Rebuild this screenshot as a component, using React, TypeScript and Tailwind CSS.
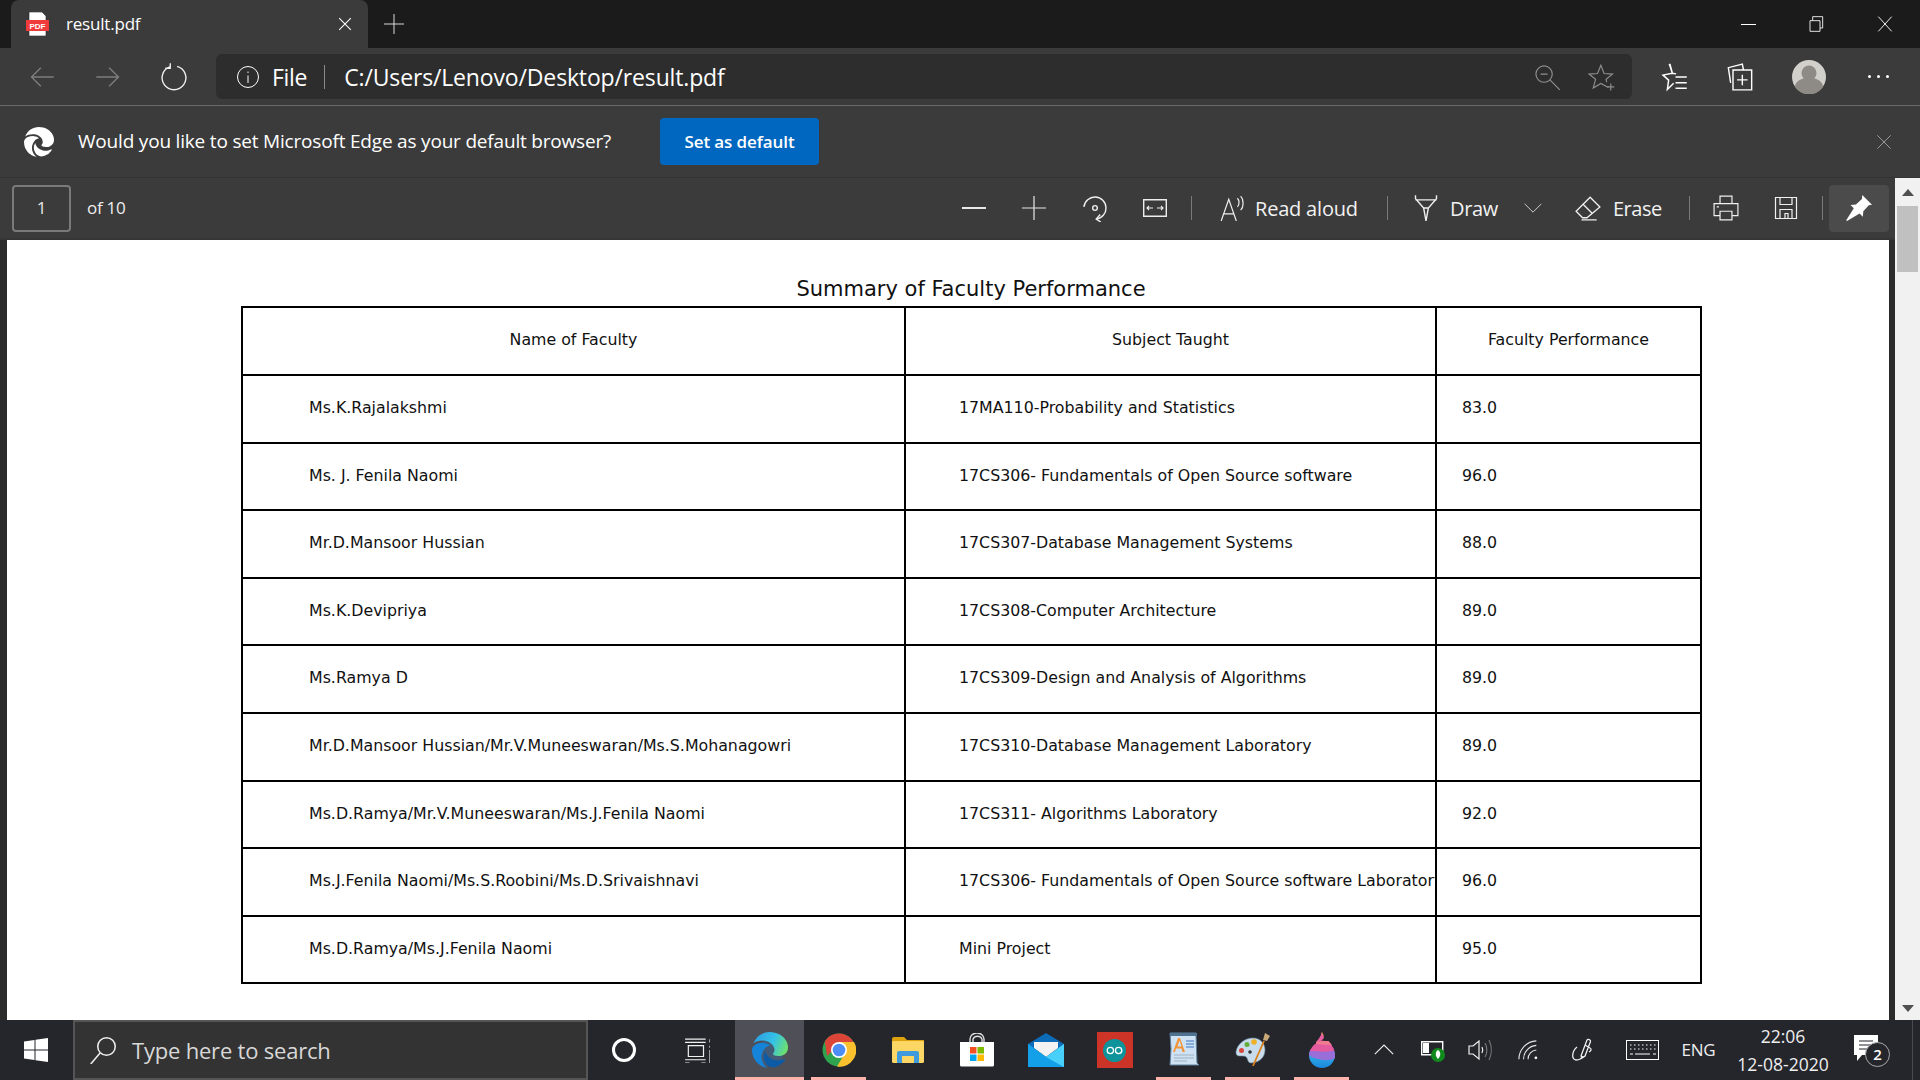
import type { ReactNode } from "react";

const EDGE_BOTTOM =
  "M21.86 17.86q.14 0 .25.12.1.13.1.25t-.11.33l-.32.46-.43.53-.44.5q-.21.25-.38.42l-.22.23q-.58.53-1.34 1.04-.76.51-1.6.91-.86.4-1.74.64t-1.67.24q-.9 0-1.69-.28-.8-.28-1.48-.78-.68-.5-1.22-1.17-.53-.66-.92-1.44-.38-.77-.58-1.6-.2-.83-.2-1.67 0-1 .32-1.96.33-.97.87-1.8.14.95.55 1.77.41.82 1.02 1.5.6.68 1.38 1.21.78.54 1.64.9.86.36 1.77.56.92.2 1.8.2 1.12 0 2.18-.24 1.06-.23 2.06-.72l.2-.1.2-.05z";
const EDGE_LEFT =
  "M6.36 16.59q0 1.1.27 2.15.27 1.06.78 2.03.51.96 1.24 1.77.74.82 1.66 1.4-1.47-.2-2.8-.74-1.33-.55-2.48-1.37-1.15-.83-2.08-1.9-.92-1.07-1.58-2.33T.36 14.94Q0 13.54 0 12.06q0-.81.32-1.49.31-.68.83-1.23.53-.55 1.2-.96.66-.4 1.35-.66.74-.27 1.5-.39.78-.12 1.55-.12.7 0 1.42.1.72.12 1.4.35.68.23 1.32.57.63.35 1.16.83-.35 0-.7.07-.33.07-.65.23v-.02q-.63.28-1.2.74-.57.46-1.05 1.04-.48.58-.87 1.26-.38.67-.65 1.39-.27.71-.42 1.44-.15.72-.15 1.38z";
const EDGE_TOP =
  "M11.96.06q1.7 0 3.33.39 1.63.38 3.07 1.15 1.43.77 2.62 1.93 1.18 1.16 1.98 2.7.49.94.76 1.96.28 1 .28 2.08 0 .89-.23 1.7-.24.8-.69 1.48-.45.68-1.1 1.22-.64.53-1.45.88-.54.24-1.11.36-.58.13-1.16.13-.42 0-.97-.03-.54-.03-1.1-.12-.55-.1-1.05-.28-.5-.19-.84-.5-.12-.09-.23-.24-.1-.16-.1-.33 0-.15.16-.35.16-.2.35-.5.2-.28.36-.68.16-.4.16-.95 0-1.06-.4-1.96-.4-.91-1.06-1.64-.66-.74-1.52-1.28-.86-.55-1.79-.89-.84-.3-1.72-.44-.87-.14-1.76-.14-1.55 0-3.06.45T.94 7.55q.71-1.74 1.81-3.13 1.1-1.38 2.52-2.35Q6.68 1.1 8.37.58q1.7-.52 3.58-.52Z";

const rows = [
  ["Ms.K.Rajalakshmi", "17MA110-Probability and Statistics", "83.0"],
  ["Ms. J. Fenila Naomi", "17CS306- Fundamentals of Open Source software", "96.0"],
  ["Mr.D.Mansoor Hussian", "17CS307-Database Management Systems", "88.0"],
  ["Ms.K.Devipriya", "17CS308-Computer Architecture", "89.0"],
  ["Ms.Ramya D", "17CS309-Design and Analysis of Algorithms", "89.0"],
  ["Mr.D.Mansoor Hussian/Mr.V.Muneeswaran/Ms.S.Mohanagowri", "17CS310-Database Management Laboratory", "89.0"],
  ["Ms.D.Ramya/Mr.V.Muneeswaran/Ms.J.Fenila Naomi", "17CS311- Algorithms Laboratory", "92.0"],
  ["Ms.J.Fenila Naomi/Ms.S.Roobini/Ms.D.Srivaishnavi", "17CS306- Fundamentals of Open Source software Laboratory", "96.0"],
  ["Ms.D.Ramya/Ms.J.Fenila Naomi", "Mini Project", "95.0"],
];

const Line = ({ size = 24, color = "#fff", width = 1.2, children }: { size?: number; color?: string; width?: number; children: ReactNode }) => (
  <svg width={size} height={size} viewBox="0 0 24 24" fill="none" stroke={color} strokeWidth={width}>
    {children}
  </svg>
);

const Cell = ({ w, children }: { w: string; children: ReactNode }) => (
  <div className={`${w} h-full flex items-center justify-center shrink-0`}>{children}</div>
);

const Sep = ({ className }: { className: string }) => <div className={`w-px h-[24px] bg-[#7a7a7a] shrink-0 ${className}`} />;

const TaskIcon = ({ active, underline, children }: { active?: boolean; underline?: boolean; children: ReactNode }) => (
  <div className={`w-[69px] h-full flex justify-center shrink-0 ${active ? "bg-[#4f4f57]" : ""}`}>
    <div
      className={`${active ? "w-full" : "w-[55px]"} h-full flex items-center justify-center border-y-[3px] border-t-transparent ${
        underline ? "border-b-[#ffb3ad]" : "border-b-transparent"
      }`}
    >
      {children}
    </div>
  </div>
);

const EdgeColor = () => (
  <svg width="36" height="36" viewBox="0 0 24 24">
    <defs>
      <linearGradient id="edgeTop" x1="0" y1="0.3" x2="1" y2="0.6">
        <stop offset="0" stopColor="#2d9fe0" />
        <stop offset="0.55" stopColor="#35c1e8" />
        <stop offset="1" stopColor="#6ee06c" />
      </linearGradient>
    </defs>
    <circle cx="12" cy="14" r="9" fill="#1b84d6" opacity="0.25" />
    <path d={EDGE_BOTTOM} fill="#0d5ba6" />
    <path d={EDGE_LEFT} fill="#1583d8" />
    <path d={EDGE_TOP} fill="url(#edgeTop)" />
  </svg>
);

const Chrome = () => (
  <svg width="34" height="34" viewBox="0 0 34 34">
    <circle cx="17" cy="17" r="16.5" fill="#2fa44f" />
    <path d="M17 .5A16.5 16.5 0 0 1 33.2 14L17 11 5 23 2.8 8.5A16.5 16.5 0 0 1 17 .5z" fill="#db4437" />
    <path d="M17 9h15a16.5 16.5 0 0 1-17 24.4L23 20z" fill="#fbc02d" />
    <circle cx="17" cy="17" r="8" fill="#fff" />
    <circle cx="17" cy="17" r="6.3" fill="#4d8df6" />
  </svg>
);

const Folder = () => (
  <svg width="32" height="28" viewBox="0 0 32 28">
    <path d="M0 3a2 2 0 0 1 2-2h10l3 3h17v3H0z" fill="#dda20e" />
    <rect y="5" width="32" height="22" rx="1.5" fill="#fcd766" />
    <path d="M5 27V17a2 2 0 0 1 2-2h18a2 2 0 0 1 2 2v10h-5v-7H10v7z" fill="#3f9bdc" />
  </svg>
);

const Store = () => (
  <svg width="36" height="34" viewBox="0 0 36 34">
    <path d="M11 10V6a7 6 0 0 1 14 0v4M14 10V6a5 5 0 0 1 9 0v4" fill="none" stroke="#ddd" strokeWidth="1.4" />
    <path d="M1 9h34v23a1.5 1.5 0 0 1-1.5 1.5h-31A1.5 1.5 0 0 1 1 32z" fill="#fff" />
    <rect x="11" y="14" width="6.5" height="6.5" fill="#f25022" />
    <rect x="18.5" y="14" width="6.5" height="6.5" fill="#7fba00" />
    <rect x="11" y="21.5" width="6.5" height="6.5" fill="#00a4ef" />
    <rect x="18.5" y="21.5" width="6.5" height="6.5" fill="#ffb900" />
  </svg>
);

const Mail = () => (
  <svg width="36" height="34" viewBox="0 0 36 34">
    <path d="M18 0 36 11v6H0v-6z" fill="#0c6cb8" />
    <path d="M6 9h24v6L18 24 6 15z" fill="#f3f3f3" />
    <path d="M0 11l18 13 18-13v23H0z" fill="#28a8ea" />
    <path d="M0 11l18 13 18 10H0z" fill="#14a0e8" />
    <path d="M18 24l18-13v23z" fill="#50d9ff" opacity="0.8" />
  </svg>
);

const Arduino = () => (
  <div className="w-[36px] h-[36px] bg-[#cb3426] flex items-center justify-center">
    <svg width="23" height="23" viewBox="0 0 24 24">
      <circle cx="12" cy="12" r="12" fill="#0e939b" />
      <circle cx="7.7" cy="12" r="3.3" fill="none" stroke="#fff" strokeWidth="1.4" />
      <circle cx="16.3" cy="12" r="3.3" fill="none" stroke="#fff" strokeWidth="1.4" />
    </svg>
  </div>
);

const WordPad = () => (
  <svg width="32" height="36" viewBox="0 0 32 36">
    <path d="M2 1h26v2l1 28 2 2H2l1-16z" fill="#cfe2f3" stroke="#5d7f9b" />
    <rect x="2" y="1" width="27" height="3" fill="#4d7390" />
    <path d="M5 20l5-14h2l5 14h-2.500l-1-3.500h-5.500l-1 3.500zm4.500-5.500h4l-2-6z" fill="#f0953a" />
    <path d="M18 9h8M18 12h8M18 15h8" stroke="#6f9bd2" strokeWidth="1.3" />
    <path d="M6 23h20M6 26h20M6 29h13" stroke="#9eb2c4" />
  </svg>
);

const Palette = () => (
  <svg width="36" height="36" viewBox="0 0 36 36">
    <path d="M1 20C2 12 10 6 18 6c7 0 12 5 12 12 0 8-7 13-14 13-3 0-3-3-4-5s-3-2-6-2-5 0-5-4z" fill="#c8dceb" stroke="#6d8ba0" strokeWidth="0.6" />
    <circle cx="6.500" cy="18.500" r="2.500" fill="#d9463c" />
    <circle cx="12" cy="12.500" r="2.500" fill="#62ad3c" />
    <circle cx="19" cy="10" r="2.800" fill="#efb128" />
    <circle cx="15" cy="20" r="1.800" fill="#333" />
    <path d="M18 34 29 9" stroke="#dc7f19" strokeWidth="1.8" />
    <path d="M28 8l2-7 5 3-3 5z" fill="#c9a877" />
  </svg>
);

const Drop = () => (
  <svg width="28" height="36" viewBox="0 0 28 36">
    <defs>
      <clipPath id="dropClip">
        <path d="M14 0c1 5 13 12 13 23a13 13 0 0 1-26 0C1 15 12 9 14 0z" />
      </clipPath>
      <linearGradient id="dropBlue" x1="0" y1="0" x2="0" y2="1">
        <stop offset="0" stopColor="#35b4e8" />
        <stop offset="1" stopColor="#1a86de" />
      </linearGradient>
    </defs>
    <g clipPath="url(#dropClip)">
      <rect y="20" width="28" height="16" fill="url(#dropBlue)" />
      <path d="M0 17c8 1 18 2 28-2v11c-8 4-20 2-28-3z" fill="#9a6ed8" />
      <path d="M2 15C8 9 14 12 28 10v8c-8 3-18 1-28 1z" fill="#e65aa0" />
      <path d="M8 9c4-1 12 1 20-1v5c-6 1-14-1-20-1z" fill="#f07a90" />
      <path d="M10 0h18v9c-4 0-8-1-9-4l-5-2z" fill="#fbc92e" />
      <path d="M8 0h6l2 6-4 4-6-1z" fill="#ea5fa0" />
    </g>
  </svg>
);

const App = () => {
  return (
    <div
      className="w-[1920px] h-[1080px] overflow-hidden flex flex-col bg-[#3b3b3b] text-white"
      style={{ fontFamily: '"Open Sans", "Noto Sans", sans-serif' }}
    >
      {/* tab strip */}
      <div className="h-[48px] bg-[#1b1b1b] flex shrink-0">
        <div className="ml-[11px] w-[357px] h-full bg-[#3b3b3b] rounded-t-lg flex items-center shrink-0">
          <svg className="ml-[15px]" width="23" height="24" viewBox="0 0 23 24">
            <path d="M3 0h13l4 4v20H3z" fill="#fff" stroke="#222" strokeWidth="0.6" />
            <rect y="8" width="23" height="11" fill="#ef3b3b" />
            <text x="11.500" y="16.800" textAnchor="middle" fontSize="8" fontWeight="700" fill="#fff" fontFamily="Liberation Sans, sans-serif">
              PDF
            </text>
          </svg>
          <span className="ml-[17px] text-[17px] tracking-[-0.2px] flex-1">result.pdf</span>
          <div className="mr-[16px]">
            <Line size={14} width={1.8}>
              <path d="M2 2l20 20M22 2 2 22" />
            </Line>
          </div>
        </div>
        <div className="ml-[15px] flex items-center">
          <Line size={22} color="#d8d8d8" width={1.1}>
            <path d="M12 1v22M1 12h22" />
          </Line>
        </div>
        <div className="flex-1" />
        <Cell w="w-[68px]">
          <div className="w-[15px] h-px bg-white" />
        </Cell>
        <Cell w="w-[68px]">
          <Line size={16} width={1.3}>
            <path d="M3 7h15v16H3zM7 7V1h15v17h-4" />
          </Line>
        </Cell>
        <Cell w="w-[70px]">
          <Line size={16} width={1.4}>
            <path d="M2 1l20 22M22 1 2 23" />
          </Line>
        </Cell>
      </div>

      {/* address bar row */}
      <div className="h-[57px] flex items-center pl-[9px] pr-[8px] shrink-0">
        <Cell w="w-[66px]">
          <Line size={28} color="#7d7d7d">
            <path d="M22 12H3M11 4l-8 8 8 8" />
          </Line>
        </Cell>
        <Cell w="w-[66px]">
          <Line size={28} color="#7d7d7d">
            <path d="M2 12h19M13 4l8 8-8 8" />
          </Line>
        </Cell>
        <Cell w="w-[66px]">
          <Line size={30} color="#f0f0f0" width={1.1}>
            <path d="M9.500 3.500A9.500 9.500 0 1 0 14.500 3.500M9 1v4H5" />
          </Line>
        </Cell>
        <div className="ml-[9px] h-[45px] flex-1 bg-[#2d2d2d] rounded-md flex items-center">
          <div className="ml-[20px]">
            <Line size={24} width={1}>
              <circle cx="12" cy="12" r="10.500" />
              <path d="M12 10.500V18M12 6.500v1.500" />
            </Line>
          </div>
          <span className="ml-[12px] pt-[2px] text-[23px] tracking-[-0.3px]">File</span>
          <div className="ml-[17px] w-px h-[24px] bg-[#8a8a8a]" />
          <span className="ml-[19px] pt-[2px] text-[23px] tracking-[-0.15px] flex-1 whitespace-nowrap">C:/Users/Lenovo/Desktop/result.pdf</span>
          <Line size={28} color="#8f8f8f" width={1}>
            <circle cx="9.500" cy="9.500" r="7" />
            <path d="M14.500 14.500 23 23M6.500 9.500h6" />
          </Line>
          <div className="ml-[27px] mr-[16px]">
            <Line size={28} color="#8f8f8f" width={1}>
              <path d="M17.500 21 11 17.500 4.500 21.500 6.500 14 1 9.500 8.200 9 11 2l2.800 7 7.200.5-5.500 4.500.5 2.500" />
              <path d="M19.500 17.500v6M16.500 20.500h6" />
            </Line>
          </div>
        </div>
        <div className="ml-[7px] flex h-full items-center">
          <Cell w="w-[67px]">
            <Line size={30} width={1.2}>
              <path d="M9 1.500 11.500 9 4 10.500l4.500 4-1 7.500 5-5M9.500 1.500l2 7.500 3 .5" />
              <path d="M14 12h9M14 16.500h9M14 21h9" />
            </Line>
          </Cell>
          <Cell w="w-[67px]">
            <Line size={28} width={1.2}>
              <path d="M6 6h16v17H6zM4 17 2 4l12-3 1 5M14 10v9M9.500 14.500h9" />
            </Line>
          </Cell>
          <Cell w="w-[71px]">
            <svg width="34" height="34" viewBox="0 0 34 34">
              <circle cx="17" cy="17" r="17" fill="#d2d0cb" />
              <circle cx="17" cy="13" r="7.500" fill="#8e8a85" />
              <path d="M3 27a14 9.500 0 0 1 28 0 17 17 0 0 1-28 0z" fill="#8e8a85" />
            </svg>
          </Cell>
          <Cell w="w-[68px]">
            <div className="flex gap-[6px]">
              <div className="w-[3px] h-[3px] rounded-full bg-white" />
              <div className="w-[3px] h-[3px] rounded-full bg-white" />
              <div className="w-[3px] h-[3px] rounded-full bg-white" />
            </div>
          </Cell>
        </div>
      </div>
      <div className="h-px bg-[#6a6a6a] shrink-0" />

      {/* default browser prompt */}
      <div className="h-[72px] flex items-center shrink-0 border-b border-[#333]">
        <svg className="ml-[24px]" width="30" height="32" viewBox="0 0 24 24" fill="#fff">
          <path d={EDGE_BOTTOM} />
          <path d={EDGE_LEFT} />
          <path d={EDGE_TOP} />
        </svg>
        <span className="ml-[24px] text-[19px] tracking-[-0.19px] w-[582px] whitespace-nowrap">
          Would you like to set Microsoft Edge as your default browser?
        </span>
        <div className="w-[159px] h-[47px] bg-[#0067c0] rounded-sm flex items-center justify-center text-[17px] font-semibold tracking-[-0.1px]">
          Set as default
        </div>
        <div className="flex-1" />
        <div className="mr-[28px]">
          <Line size={16} color="#a0a0a0" width={1.4}>
            <path d="M2 2l20 20M22 2 2 22" />
          </Line>
        </div>
      </div>

      {/* viewer area */}
      <div className="flex-1 flex min-h-0">
        <div className="w-[1895px] flex flex-col shrink-0">
          <div className="h-[62px] flex items-center shrink-0 pr-[6px] border-b-2 border-[#353535]">
            <div className="ml-[12px] w-[59px] h-[47px] border-2 border-[#7a7a7a] rounded-sm flex items-center justify-center text-[17px] text-[#e8e8e8]">
              1
            </div>
            <span className="ml-[16px] text-[17px] tracking-[-0.3px] text-[#eee]">of 10</span>
            <div className="flex-1" />
            <div className="flex items-center h-full">
              <Cell w="w-[60px]">
                <div className="w-[24px] h-[1.5px] bg-[#e8e8e8]" />
              </Cell>
              <Cell w="w-[60px]">
                <Line size={24} color="#e8e8e8" width={1.2}>
                  <path d="M12 0v24M0 12h24" />
                </Line>
              </Cell>
              <Cell w="w-[61px]">
                <Line size={28} color="#f0f0f0" width={1.2}>
                  <path d="M2.500 11A9.500 9.500 0 1 1 13 21.500" />
                  <path d="M16.500 17.500 13 21.500l4 2.500" />
                  <circle cx="12" cy="12" r="2" />
                </Line>
              </Cell>
              <Cell w="w-[60px]">
                <svg width="24" height="18" viewBox="0 0 24 18" fill="none" stroke="#eee" strokeWidth="1.4">
                  <path d="M.7.700h22.600v16.600H.7z" />
                  <path d="M4 9h6M14 9h6M6 7 4 9l2 2M18 7l2 2-2 2" strokeWidth="1.1" />
                </svg>
              </Cell>
              <Sep className="ml-[6px]" />
              <div className="ml-[24px] w-[32px] flex justify-center">
                <Line size={26} color="#f0f0f0" width={1.1}>
                  <path d="M2 24 9 4l7 20M4.500 17.500h9M17 3c2 2 2 6 0 8M20 1c3 3 3 10 0 13" />
                </Line>
              </div>
              <span className="ml-[7px] pt-[2px] w-[104px] text-[20px] tracking-[-0.2px] text-[#f2f2f2] whitespace-nowrap">Read aloud</span>
              <Sep className="ml-[28px]" />
              <div className="ml-[22px] w-[32px] flex justify-center">
                <Line size={28} color="#f0f0f0" width={1.2}>
                  <path d="M3 1v3l7 8 2 11 2-11 7-8V1M3 5h18M9.500 12h5" />
                </Line>
              </div>
              <span className="ml-[8px] pt-[2px] w-[48px] text-[20px] tracking-[-0.35px] text-[#f2f2f2]">Draw</span>
              <div className="ml-[19px] w-[32px] flex justify-center">
                <Line size={20} color="#d8d8d8" width={1.1}>
                  <path d="M2 7l10 10L22 7" />
                </Line>
              </div>
              <div className="ml-[23px] w-[32px] flex justify-center">
                <Line size={26} color="#f0f0f0" width={1.2}>
                  <path d="M14 2 23 11 11 21H7L1 15zM7 8l9 9M6 23h14" />
                </Line>
              </div>
              <span className="ml-[9px] pt-[2px] w-[48px] text-[20px] tracking-[-0.5px] text-[#f2f2f2]">Erase</span>
              <Sep className="ml-[28px]" />
              <Cell w="ml-[6px] w-[60px]">
                <Line size={26} color="#f0f0f0" width={1.1}>
                  <path d="M6.500 8V1h11v7M6.500 19H1V8h22v11h-5.500M6.500 15h11v8h-11zM3.500 11h2" />
                </Line>
              </Cell>
              <Cell w="w-[60px]">
                <Line size={24} color="#f0f0f0" width={1.2}>
                  <path d="M1.500 1.500h21v21h-21zM6 1.500v7h12v-7M6 22.500v-9h12v9M11 22.500v-5h3v5" />
                </Line>
              </Cell>
              <Sep className="ml-[6px]" />
              <div className="ml-[6px] w-[60px] h-[47px] bg-[#4b4b4b] rounded-sm flex items-center justify-center">
                <svg width="26" height="26" viewBox="0 0 24 24">
                  <path d="M15 0 24 9l-3 .5-5 5.500-.5 5-3-3L1 24l-.8-.8 7-11-3-3 5-.5 5.500-5z" fill="#fff" />
                </svg>
              </div>
            </div>
          </div>
          <div className="flex-1 pl-[7px] pr-[6px] bg-[#2b2b2b] min-h-0">
            <div
              className="h-full bg-white pt-[36px] pl-[234px] text-[#111]"
              style={{ fontFamily: '"DejaVu Sans", sans-serif' }}
            >
              <div className="w-[1460px] text-center text-[21px] leading-[27px] h-[30px]">Summary of Faculty Performance</div>
              <table className="w-[1459px] table-fixed border-collapse text-[15.8px]">
                <colgroup>
                  <col className="w-[663px]" />
                  <col className="w-[531px]" />
                  <col className="w-[265px]" />
                </colgroup>
                <thead>
                  <tr className="h-[68px]">
                    <th className="border-2 border-black font-normal pb-[2px]">Name of Faculty</th>
                    <th className="border-2 border-black font-normal pb-[2px]">Subject Taught</th>
                    <th className="border-2 border-black font-normal pb-[2px]">Faculty Performance</th>
                  </tr>
                </thead>
                <tbody>
                  {rows.map((row) => (
                    <tr className="h-[67.6px]" key={row[1]}>
                      <td className="border-2 border-black pl-[66px] pb-[2px] whitespace-nowrap">{row[0]}</td>
                      <td className="border-2 border-black pl-[53px] pb-[2px] whitespace-nowrap overflow-hidden">{row[1]}</td>
                      <td className="border-2 border-black pl-[25px] pb-[2px]">{row[2]}</td>
                    </tr>
                  ))}
                </tbody>
              </table>
            </div>
          </div>
        </div>
        {/* scrollbar */}
        <div className="w-[25px] bg-[#f1f1f1] flex flex-col items-center">
          <div className="h-[28px] flex items-center justify-center">
            <div className="w-0 h-0 border-x-[6px] border-x-transparent border-b-[7px] border-b-[#505050]" />
          </div>
          <div className="w-[21px] h-[66px] bg-[#c0c0c0]" />
          <div className="flex-1" />
          <div className="h-[24px] flex items-center justify-center">
            <div className="w-0 h-0 border-x-[6px] border-x-transparent border-t-[7px] border-t-[#505050]" />
          </div>
        </div>
      </div>

      {/* taskbar */}
      <div className="h-[60px] bg-[#25252c] flex items-center shrink-0">
        <Cell w="w-[73px] pr-[2px]">
          <svg width="24" height="24" viewBox="0 0 24 24" fill="#fff">
            <path d="M0 3.500 10.500 2v9.500H0zM11.500 1.800 24 0v11.500H11.500zM0 12.500h10.500V22L0 20.500zM11.500 12.500H24V24l-12.500-1.800z" />
          </svg>
        </Cell>
        <div className="w-[515px] h-full bg-[#333333] border-2 border-[#555] flex items-center shrink-0">
          <div className="ml-[14px]">
            <Line size={28} color="#f0f0f0" width={1.3}>
              <circle cx="15" cy="9" r="7.500" />
              <path d="M9.500 14.500 1.500 24" />
            </Line>
          </div>
          <span className="ml-[15px] text-[22px] tracking-[-0.2px] text-[#d8d8d8]">Type here to search</span>
        </div>
        <Cell w="w-[72px]">
          <div className="w-[24px] h-[24px] rounded-full border-[3.5px] border-white" />
        </Cell>
        <Cell w="w-[73px]">
          <Line size={26} color="#f0f0f0" width={1.1}>
            <path d="M1 2h19M1 5h19M4 8h14v10H4zM1 21h19M1 24h4M16 24h4M24 2v3M24 8v2M24 12v12" />
          </Line>
        </Cell>
        <div className="ml-[2px] h-full flex shrink-0">
          <TaskIcon active underline>
            <EdgeColor />
          </TaskIcon>
          <TaskIcon underline>
            <Chrome />
          </TaskIcon>
          <TaskIcon>
            <Folder />
          </TaskIcon>
          <TaskIcon>
            <Store />
          </TaskIcon>
          <TaskIcon>
            <Mail />
          </TaskIcon>
          <TaskIcon>
            <Arduino />
          </TaskIcon>
          <TaskIcon underline>
            <WordPad />
          </TaskIcon>
          <TaskIcon underline>
            <Palette />
          </TaskIcon>
          <TaskIcon underline>
            <Drop />
          </TaskIcon>
        </div>
        <div className="ml-[1px] h-full flex items-center">
          <Cell w="w-[54px]">
            <Line size={20} color="#f0f0f0" width={1.3}>
              <path d="M1 17 12 6l11 11" />
            </Line>
          </Cell>
          <Cell w="w-[44px]">
            <svg width="24" height="24" viewBox="0 0 24 24">
              <path d="M.7 3.700h21v13H.7z" fill="none" stroke="#fff" strokeWidth="1.400" />
              <rect x="2" y="5" width="6" height="10" fill="#fff" />
              <circle cx="17" cy="17" r="7" fill="#108a1c" />
              <path d="M17 12c3 2 3 6 0 9-3-3-3-7 0-9z" fill="#fff" />
            </svg>
          </Cell>
          <Cell w="w-[50px]">
            <Line size={24} color="#f0f0f0" width={1.2}>
              <path d="M1 8h4l6-5v18l-6-5H1zM14 9c1 2 1 4 0 6" />
              <path d="M17 5c2.500 4 2.500 10 0 14M21 2c3 6 3 14 0 20" stroke="#777" />
            </Line>
          </Cell>
          <Cell w="w-[48px]">
            <Line size={22} color="#e8e8e8" width={1.2}>
              <path d="M1 22A20 20 0 0 1 20 2M6 22A15 15 0 0 1 20 7M11 22A10 10 0 0 1 20 12" />
              <circle cx="19.500" cy="20.500" r="1.500" fill="#fff" stroke="none" />
            </Line>
          </Cell>
          <Cell w="w-[58px]">
            <Line size={24} color="#f0f0f0" width={1.3}>
              <path d="M11 18 17 2c1-1.500 4 0 3.500 1.500L15 18l-3 2zM7 9c-5 4-6 12-1 13 3 0 6-2 7-4M15 7l5 3c2 1 1 3-1 4" />
            </Line>
          </Cell>
          <Cell w="w-[62px]">
            <svg width="33" height="20" viewBox="0 0 33 20" fill="none" stroke="#fff" strokeWidth="1">
              <rect x="0.500" y="0.500" width="32" height="19" />
              <path d="M4 5h26M4 9h26" strokeDasharray="1.500 2.500" strokeWidth="1.200" />
              <path d="M4 14h3M9 14h15M27 14h3" strokeWidth="1.200" />
            </svg>
          </Cell>
          <Cell w="w-[51px]">
            <span className="text-[17px] text-[#eee] tracking-[-0.2px]">ENG</span>
          </Cell>
          <div className="w-[118px] h-full flex flex-col items-center justify-center text-[17.5px] leading-[28px] text-[#eee] shrink-0">
            <span>22:06</span>
            <span>12-08-2020</span>
          </div>
          <Cell w="w-[52px]">
            <div className="relative w-[28px] h-[30px]">
              <svg width="24" height="28" viewBox="0 0 24 28">
                <path d="M0 0h24v20H8l-5 6v-6H0z" fill="#fff" />
                <path d="M5 6h14M5 10h14M5 14h14" stroke="#25252c" strokeWidth="1.200" />
              </svg>
              <div className="absolute left-[11px] top-[7px] w-[25px] h-[25px] rounded-full bg-[#25252c] border border-[#aaa] flex items-center justify-center text-[15px] font-semibold">
                2
              </div>
            </div>
          </Cell>
        </div>
        <div className="flex-1" />
        <div className="w-px h-full bg-[#4a4a50] mr-[7px]" />
      </div>
    </div>
  );
};

export default App;
